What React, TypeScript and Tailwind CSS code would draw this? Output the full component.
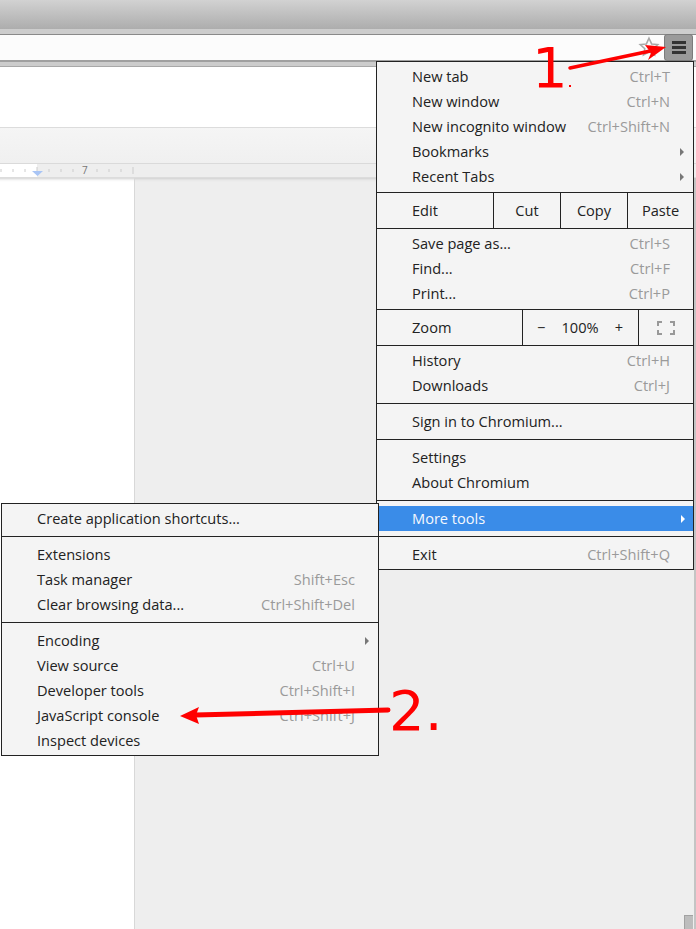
import React from 'react';

type Item = { label: string; keys?: string; arrow?: boolean };

function Row({ label, keys, arrow }: Item) {
  return (
    <div className="relative flex h-[25px] items-center justify-between pl-[35px] pr-[23px]">
      <span className="text-[#222222]">{label}</span>
      {keys && <span className="text-[#9a9a9a]">{keys}</span>}
      {arrow && <span className="absolute right-[9px] top-[9px] h-0 w-0 border-y-[4px] border-l-[4px] border-y-transparent border-l-[#777777]" />}
    </div>
  );
}

function Group({ items, className = '' }: { items: Item[]; className?: string }) {
  return (
    <div className={className}>
      {items.map((i) => (
        <Row key={i.label} {...i} />
      ))}
    </div>
  );
}

function Line() {
  return <div className="h-px bg-[#222222]" />;
}

export default function App() {
  return (
    <div className="relative flex h-[929px] w-[696px] flex-col overflow-hidden bg-[#eeeeee] text-[14.6px] leading-none [font-family:'Open_Sans','Noto_Sans',sans-serif]">
      {/* window frame */}
      <div className="h-[29px] bg-gradient-to-b from-[#d2d2d2] to-[#adadad]" />
      <div className="h-[5px] bg-[#cdcdcd]" />
      <div className="h-px bg-[#8a8a8a]" />
      <div className="h-[25px] bg-[#fcfcfc]" />
      <div className="h-[2px] bg-[#a0a0a0]" />
      <div className="h-[4px] bg-[#cccccc]" />
      <div className="h-px bg-[#a8a8a8]" />
      <div className="h-[61px] border-b border-[#dcdcdc] bg-white" />

      {/* docs toolbar */}
      <div className="h-[36px] border-b border-[#dadada] bg-gradient-to-b from-[#f5f5f5] to-[#f0f0f0]" />
      <div className="relative flex h-[14px] border-b border-[#dcdcdc] bg-[#eeeeee]">
        <div className="h-full w-[37px] bg-white" />
        <svg width="140" height="13" viewBox="0 0 140 13" className="absolute left-0 top-0">
          <path d="M1 5v3M13 5v3M25 5v3M37 3v6M49 5v3M61 5v3M73 5v3M97 5v3M109 5v3M121 5v3M133 3v7" stroke="#cccccc" />
          <path d="M32 7h11l-5.5 5z" fill="#a9c5f5" />
        </svg>
        <span className="absolute left-[82px] top-[1px] text-[10px] text-[#777777]">7</span>
      </div>

      {/* document area */}
      <div className="flex flex-1">
        <div className="w-[135px] border-r border-[#d8d8d8] bg-white shadow-[inset_0_4px_3px_-3px_#cccccc]" />
        <div className="flex-1 bg-[#eeeeee] shadow-[inset_0_4px_3px_-3px_#cccccc]" />
        <div className="w-[2px] bg-[#c4c4c4]" />
      </div>

      {/* scrollbar thumb */}
      <div className="absolute left-[684px] top-[915px] h-[14px] w-[9px] border-l border-t border-[#a2a2a2] bg-[#bdbdbd]" />

      {/* bookmark star */}
      <svg width="22" height="22" viewBox="0 0 20 20" className="absolute left-[638px] top-[36px]">
        <path d="M10 2l2.4 5.2 5.6.6-4.2 3.8 1.2 5.6L10 14.4 5 17.2l1.2-5.6L2 7.8l5.6-.6z" fill="#fbfbfb" stroke="#a8a8a8" strokeWidth="1.4" />
      </svg>

      {/* menu button */}
      <div className="absolute left-[664px] top-[34px] flex h-[27px] w-[29px] flex-col items-center justify-center gap-[2px] rounded-[3px] border border-[#7c7c7c] bg-[#9a9a9a]">
        <span className="h-[3px] w-[14px] bg-[#333333]" />
        <span className="h-[3px] w-[14px] bg-[#333333]" />
        <span className="h-[3px] w-[14px] bg-[#333333]" />
      </div>

      {/* main menu */}
      <div className="absolute left-[376px] top-[61px] w-[318px] border border-[#222222] bg-[#f4f4f4]">
        <Group
          className="pt-[1.5px] pb-[3.5px]"
          items={[
            { label: 'New tab', keys: 'Ctrl+T' },
            { label: 'New window', keys: 'Ctrl+N' },
            { label: 'New incognito window', keys: 'Ctrl+Shift+N' },
            { label: 'Bookmarks', arrow: true },
            { label: 'Recent Tabs', arrow: true },
          ]}
        />
        <Line />
        <div className="flex h-[35px] items-center text-[#222222]">
          <div className="w-[116px] pl-[35px]">Edit</div>
          <div className="flex h-full w-[67px] items-center justify-center border-l border-[#222222]">Cut</div>
          <div className="flex h-full w-[67px] items-center justify-center border-l border-[#222222]">Copy</div>
          <div className="flex h-full flex-1 items-center justify-center border-l border-[#222222]">Paste</div>
        </div>
        <Line />
        <Group
          className="pt-[1.5px] pb-[3.5px]"
          items={[
            { label: 'Save page as...', keys: 'Ctrl+S' },
            { label: 'Find...', keys: 'Ctrl+F' },
            { label: 'Print...', keys: 'Ctrl+P' },
          ]}
        />
        <Line />
        <div className="flex h-[35px] items-center text-[#222222]">
          <div className="w-[145px] pl-[35px]">Zoom</div>
          <div className="flex h-full w-[116px] items-center justify-between border-l border-[#222222] pl-[14px] pr-[15px]">
            <span>−</span>
            <span>100%</span>
            <span>+</span>
          </div>
          <div className="flex h-full flex-1 items-center justify-center border-l border-[#222222]">
            <svg width="18" height="14" viewBox="0 0 18 14">
              <path d="M1 5V1h4M13 1h4v4M17 9v4h-4M5 13H1V9" fill="none" stroke="#999999" strokeWidth="2" />
            </svg>
          </div>
        </div>
        <Line />
        <Group
          className="pt-[1.5px] pb-[5.5px]"
          items={[
            { label: 'History', keys: 'Ctrl+H' },
            { label: 'Downloads', keys: 'Ctrl+J' },
          ]}
        />
        <Line />
        <Group className="pt-[5px] pb-[5px]" items={[{ label: 'Sign in to Chromium...' }]} />
        <Line />
        <Group
          className="pt-[4.5px] pb-[5.5px]"
          items={[{ label: 'Settings' }, { label: 'About Chromium' }]}
        />
        <Line />
        <div className="py-[5px]">
          <div className="relative flex h-[25px] items-center bg-[#3a8ce8] pl-[35px] text-[#f4f8fe]">
            More tools
            <span className="absolute right-[8px] top-[9px] h-0 w-0 border-y-[4px] border-l-[4px] border-y-transparent border-l-white" />
          </div>
        </div>
        <Line />
        <Group className="pt-[4.5px] pb-[2.5px]" items={[{ label: 'Exit', keys: 'Ctrl+Shift+Q' }]} />
      </div>

      {/* submenu */}
      <div className="absolute left-[1px] top-[503px] w-[378px] border border-[#222222] bg-[#f4f4f4]">
        <Group className="pt-[2px] pb-[5px]" items={[{ label: 'Create application shortcuts...' }]} />
        <Line />
        <Group
          className="pt-[4.5px] pb-[5.5px]"
          items={[
            { label: 'Extensions' },
            { label: 'Task manager', keys: 'Shift+Esc' },
            { label: 'Clear browsing data...', keys: 'Ctrl+Shift+Del' },
          ]}
        />
        <Line />
        <Group
          className="pt-[4.5px] pb-[2.5px]"
          items={[
            { label: 'Encoding', arrow: true },
            { label: 'View source', keys: 'Ctrl+U' },
            { label: 'Developer tools', keys: 'Ctrl+Shift+I' },
            { label: 'JavaScript console', keys: 'Ctrl+Shift+J' },
            { label: 'Inspect devices' },
          ]}
        />
      </div>

      {/* annotations */}
      <svg width="696" height="929" viewBox="0 0 696 929" className="pointer-events-none absolute left-0 top-0">
        <path d="M570 68L655 50" stroke="#ff0000" strokeWidth="3.5" strokeLinecap="round" />
        <path d="M666 47L645 45L651 53L648 60z" fill="#ff0000" />
        <path d="M388 710L195 715" stroke="#ff0000" strokeWidth="5" strokeLinecap="round" />
        <path d="M180 716L199 707L196 715L199 724z" fill="#ff0000" />
      </svg>
      <span className="absolute left-[532px] top-[36px] text-[56px] leading-[64px] text-[#ff0000] [font-family:'DejaVu_Sans',sans-serif]">1</span>
      <span className="absolute left-[569px] top-[85px] h-[2px] w-[2px] bg-[#ff0000]" />
      <span className="absolute left-[389px] top-[679px] text-[56px] leading-[64px] text-[#ff0000] [font-family:'DejaVu_Sans',sans-serif]">2.</span>
    </div>
  );
}
